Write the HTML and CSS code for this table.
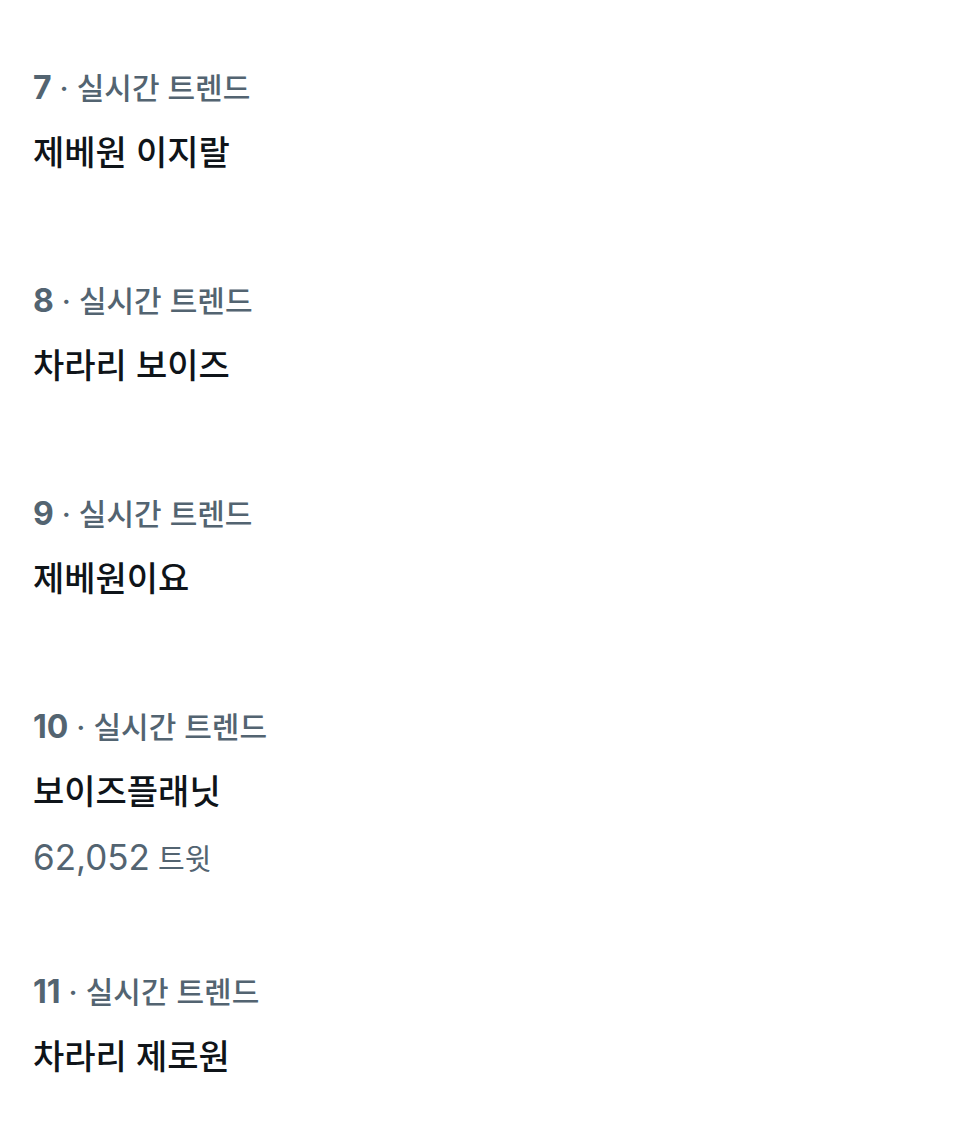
FILE: index.html
```html
<!DOCTYPE html>
<html lang="ko">
<head>
<meta charset="utf-8">
<link rel="stylesheet" href="styles.css">
</head>
<body>
<main class="list">
  <section class="trend">
    <div class="meta"><span class="rank">7</span> · 실시간 트렌드</div>
    <div class="title">제베원 이지랄</div>
  </section>
  <section class="trend">
    <div class="meta"><span class="rank">8</span> · 실시간 트렌드</div>
    <div class="title">차라리 보이즈</div>
  </section>
  <section class="trend">
    <div class="meta"><span class="rank">9</span> · 실시간 트렌드</div>
    <div class="title">제베원이요</div>
  </section>
  <section class="trend">
    <div class="meta"><span class="rank">10</span> · 실시간 트렌드</div>
    <div class="title">보이즈플래닛</div>
    <div class="count"><span class="num">62,052</span> 트윗</div>
  </section>
  <section class="trend">
    <div class="meta"><span class="rank">11</span> · 실시간 트렌드</div>
    <div class="title">차라리 제로원</div>
  </section>
</main>
</body>
</html>
```
FILE: styles.css
```css
html, body {
  margin: 0;
  padding: 0;
  background: #ffffff;
}
body {
  font-family: "Inter", "Noto Sans CJK KR", sans-serif;
  -webkit-font-smoothing: antialiased;
}
.list {
  display: flex;
  flex-direction: column;
  padding: 68px 0 0 33px;
}
.trend {
  display: flex;
  flex-direction: column;
  padding-bottom: 103px;
}
.meta {
  font-size: 30px;
  line-height: 40px;
  color: #536471;
  font-weight: 500;
}
.rank {
  font-size: 32px;
  font-weight: 700;
}
.title {
  margin-top: 20px;
  font-size: 34px;
  line-height: 50px;
  color: #0f1419;
  font-weight: 500;
}
.count {
  margin-top: 20px;
  margin-bottom: -11px;
  font-size: 29px;
  line-height: 40px;
  color: #536471;
  font-weight: 400;
}
.num {
  font-size: 35px;
}
```
